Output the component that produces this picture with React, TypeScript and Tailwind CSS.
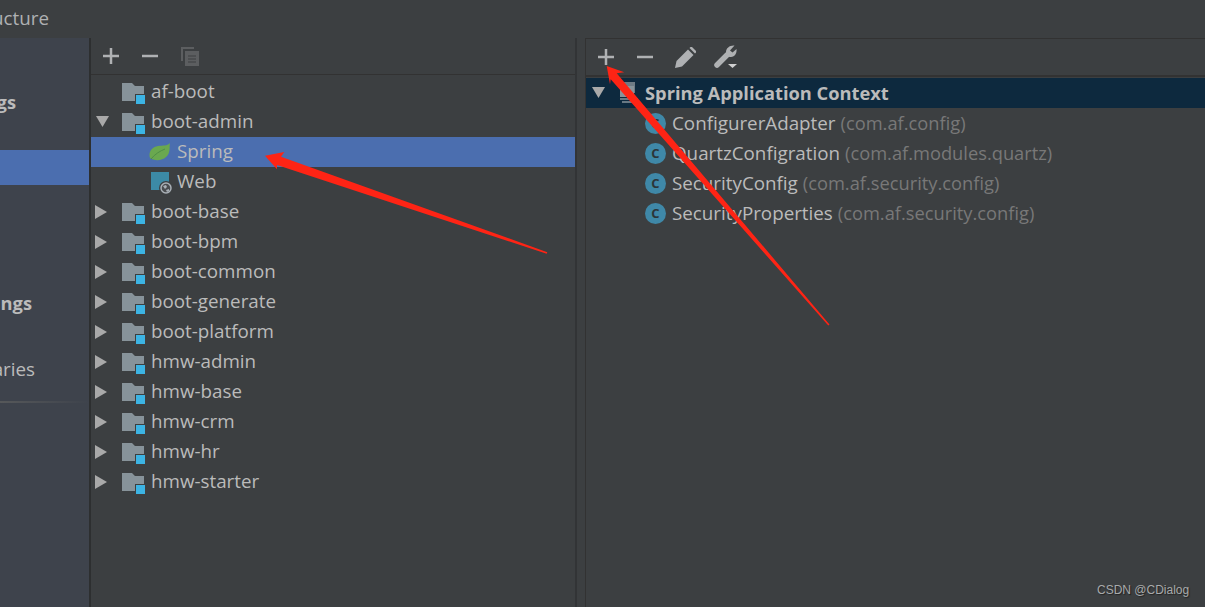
const uiFont = { fontFamily: '"Open Sans", "Noto Sans", sans-serif' }

const modules = [
  { name: 'af-boot', arrow: 'none' },
  { name: 'boot-admin', arrow: 'down' },
  { name: 'Spring', kind: 'spring' },
  { name: 'Web', kind: 'web' },
  { name: 'boot-base', arrow: 'right' },
  { name: 'boot-bpm', arrow: 'right' },
  { name: 'boot-common', arrow: 'right' },
  { name: 'boot-generate', arrow: 'right' },
  { name: 'boot-platform', arrow: 'right' },
  { name: 'hmw-admin', arrow: 'right' },
  { name: 'hmw-base', arrow: 'right' },
  { name: 'hmw-crm', arrow: 'right' },
  { name: 'hmw-hr', arrow: 'right' },
  { name: 'hmw-starter', arrow: 'right' },
]

const beans = [
  { name: 'ConfigurerAdapter', pkg: '(com.af.config)' },
  { name: 'QuartzConfigration', pkg: '(com.af.modules.quartz)' },
  { name: 'SecurityConfig', pkg: '(com.af.security.config)' },
  { name: 'SecurityProperties', pkg: '(com.af.security.config)' },
]

function Arrow({ dir }: { dir?: string }) {
  if (dir === 'down') {
    return (
      <svg width="14" height="14" viewBox="0 0 14 14" className="shrink-0">
        <path d="M1 1h13L7.500 12z" fill="#a9a9a9" />
      </svg>
    )
  }
  if (dir === 'right') {
    return (
      <svg width="14" height="14" viewBox="0 0 14 14" className="shrink-0">
        <path d="M0 0l12 7L0 14z" fill="#a9a9a9" />
      </svg>
    )
  }
  return <span className="w-[14px] shrink-0" />
}

function FolderIcon() {
  return (
    <svg width="24" height="24" viewBox="0 0 24 24" className="shrink-0">
      <path d="M0 3h10l3 3h9v15H0z" fill="#87939a" />
      <rect x="13.500" y="14.500" width="10" height="10" fill="#3cb4e4" stroke="#3c3f41" strokeWidth="1" />
    </svg>
  )
}

function LeafIcon() {
  return (
    <svg width="22" height="18" viewBox="0 0 22 18" className="shrink-0">
      <path d="M21 0C20 4 22 10 17 14C13 18 5 18 1 15C-1 9 3 4 9 3C14 2.500 18 3 21 0z" fill="#6aa84f" />
      <path d="M2 16C6 11 11 8 16 6" stroke="#4f8f46" strokeWidth="1" fill="none" />
    </svg>
  )
}

function WebIcon() {
  return (
    <svg width="26" height="26" viewBox="0 0 26 26" className="shrink-0">
      <rect x="2" y="3" width="18" height="18" fill="#3c8aa6" />
      <circle cx="17" cy="19" r="7" fill="#3c3f41" />
      <circle cx="17" cy="19" r="5" fill="#4a4d50" stroke="#a9b0b6" strokeWidth="1.500" />
      <path d="M14 17l3-1 1 2-2 2zM17 21l3-1v2l-2 1z" fill="#a9b0b6" />
    </svg>
  )
}

function ClassIcon() {
  return (
    <span className="flex h-[21px] w-[21px] shrink-0 items-center justify-center rounded-full bg-[#3f88a8] text-[13px] font-bold leading-none text-[#2c3538]">
      C
    </span>
  )
}

function ModuleRow({ item }: { item: (typeof modules)[number] }) {
  if (item.kind) {
    const selected = item.kind === 'spring'
    return (
      <div className={`flex h-[30px] items-center pl-[58px] ${selected ? 'bg-[#4b6eaf]' : ''}`}>
        <div className="flex w-[28px] shrink-0 items-center">
          {selected ? <LeafIcon /> : <WebIcon />}
        </div>
        <span className="mb-[2px] text-[#bbbbbb]">{item.name}</span>
      </div>
    )
  }
  return (
    <div className="flex h-[30px] items-center pl-[4px]">
      <Arrow dir={item.arrow} />
      <div className="ml-[13px] mr-[5px] flex">
        <FolderIcon />
      </div>
      <span className="mb-[2px] text-[#bbbbbb]">{item.name}</span>
    </div>
  )
}

function PlusIcon() {
  return (
    <svg width="16" height="16" viewBox="0 0 16 16">
      <path d="M8 0v16M0 8h16" stroke="#afb1b3" strokeWidth="2.500" />
    </svg>
  )
}

function MinusIcon() {
  return (
    <svg width="16" height="16" viewBox="0 0 16 16">
      <path d="M0 8h16" stroke="#afb1b3" strokeWidth="2.500" />
    </svg>
  )
}

function CopyIcon() {
  return (
    <svg width="20" height="20" viewBox="0 0 20 20">
      <path d="M1 1h13v2H3v12H1z" fill="#5c5e60" />
      <rect x="5" y="5" width="14" height="15" fill="#5c5e60" />
      <path d="M8 10h8M8 13h8M8 16h8" stroke="#3c3f41" strokeWidth="1" />
    </svg>
  )
}

function PencilIcon() {
  return (
    <svg width="21" height="21" viewBox="0 0 21 21">
      <path d="M0 21l1.500-7L13 2.500l5.500 5.500L7 19.500z" fill="#afb1b3" />
      <path d="M14.500 1l1-1h1.500L21 4v1.500l-1 1z" fill="#afb1b3" />
    </svg>
  )
}

function WrenchIcon() {
  return (
    <svg width="26" height="24" viewBox="0 0 26 24">
      <path d="M3 20L13 10" stroke="#afb1b3" strokeWidth="5.500" strokeLinecap="round" />
      <path
        d="M20.500 0.500C16 0 12 3 12 7C12 10 14 12 17 12C21 12 23 8 22.500 4L18.500 7.500L16 5.500z"
        fill="#afb1b3"
      />
      <path d="M14 19h9l-4.500 4z" fill="#d0d0d0" />
    </svg>
  )
}

export default function App() {
  return (
    <div className="relative flex h-[607px] w-[1205px] flex-col overflow-hidden bg-[#3c3f41] text-[18.8px]" style={uiFont}>
      <div className="flex h-[38px] w-[49px] shrink-0 justify-end overflow-hidden whitespace-nowrap pt-[5px] leading-[26px] text-[#afb1b3]">
        <span className="shrink-0">Project Structure</span>
      </div>

      <div className="flex min-h-0 flex-1">
        {/* settings sidebar, only its right end is in the frame */}
        <div className="flex w-[89px] shrink-0 flex-col whitespace-nowrap bg-[#3e434c] text-[#bbbbbb]">
          <div className="mt-[49px] flex h-[30px] items-center justify-end pr-[73px] text-[18.3px] font-bold">Project Settings</div>
          <div className="mt-[33px] h-[35px] bg-[#4b6eaf]" />
          <div className="mt-[103px] flex h-[30px] items-center justify-end pr-[57px] text-[18.3px] font-bold">Platform Settings</div>
          <div className="mt-[36px] flex h-[30px] items-center justify-end pr-[54px]">Global Libraries</div>
          <div className="mt-[17px] h-[2px] bg-gradient-to-r from-[#56585a] to-[#3e434c]" />
        </div>

        <div className="w-[2px] shrink-0 bg-[#2d2f30]" />

        {/* modules tree */}
        <div className="flex w-[484px] shrink-0 flex-col">
          <div className="flex h-[37px] shrink-0 items-center gap-[23px] border-b border-[#323232] pl-[12px]">
            <PlusIcon />
            <MinusIcon />
            <div className="-ml-[1px] flex">
              <CopyIcon />
            </div>
          </div>
          <div className="mt-[2px]">
            {modules.map((item) => (
              <ModuleRow key={item.name} item={item} />
            ))}
          </div>
        </div>

        <div className="w-[2px] shrink-0 bg-[#323436]" />
        <div className="w-[8px] shrink-0" />

        {/* spring contexts */}
        <div className="flex min-w-0 flex-1 flex-col border-l border-t border-[#323232]">
          <div className="flex h-[38px] shrink-0 items-center gap-[22px] border-b-2 border-[#323232] pl-[12px]">
            <PlusIcon />
            <div className="ml-[1px] flex">
              <MinusIcon />
            </div>
            <PencilIcon />
            <div className="-ml-[4px] flex">
              <WrenchIcon />
            </div>
          </div>
          <div className="mt-[1px] flex h-[30px] items-center bg-[#0d293e] pl-[5px]">
            <Arrow dir="down" />
            <svg width="24" height="24" viewBox="0 0 24 24" className="ml-[13px] mr-[3px] shrink-0">
              <rect x="6" y="1" width="11" height="11" fill="#6e7b85" />
              <rect x="2" y="5" width="14" height="11" fill="#87939a" />
              <path d="M2 18h18M4 21h18" stroke="#87939a" strokeWidth="1.500" />
            </svg>
            <span className="text-[18.3px] font-bold text-[#bbbbbb]">Spring Application Context</span>
          </div>
          {beans.map((bean) => (
            <div key={bean.name} className="flex h-[30px] items-center pl-[59px]">
              <ClassIcon />
              <span className="ml-[6px] text-[#bbbbbb]">{bean.name}</span>
              <span className="ml-[5px] text-[18.3px] text-[#787878]">{bean.pkg}</span>
            </div>
          ))}
        </div>
      </div>

      {/* red annotation arrows drawn over the screenshot */}
      <svg width="1205" height="607" viewBox="0 0 1205 607" className="pointer-events-none absolute left-0 top-0">
        <path d="M265 155.700L284.300 152L281 156.700L547.300 252.200L546.700 253.700L277 165L277 169.300Z" fill="#fe2415" />
        <path d="M606.700 66L624.300 72.300L616.700 73.300L829.500 324.500L828.300 325.500L610.700 79.300L610 84.300Z" fill="#fe2415" />
      </svg>

      <span
        className="absolute left-[1097px] top-[582px] text-[12px] leading-[16px] text-[#a8aaab] [text-shadow:1px_1px_1px_#222]"
        style={{ fontFamily: '"Liberation Sans", sans-serif' }}
      >
        CSDN @CDialog
      </span>
    </div>
  )
}
